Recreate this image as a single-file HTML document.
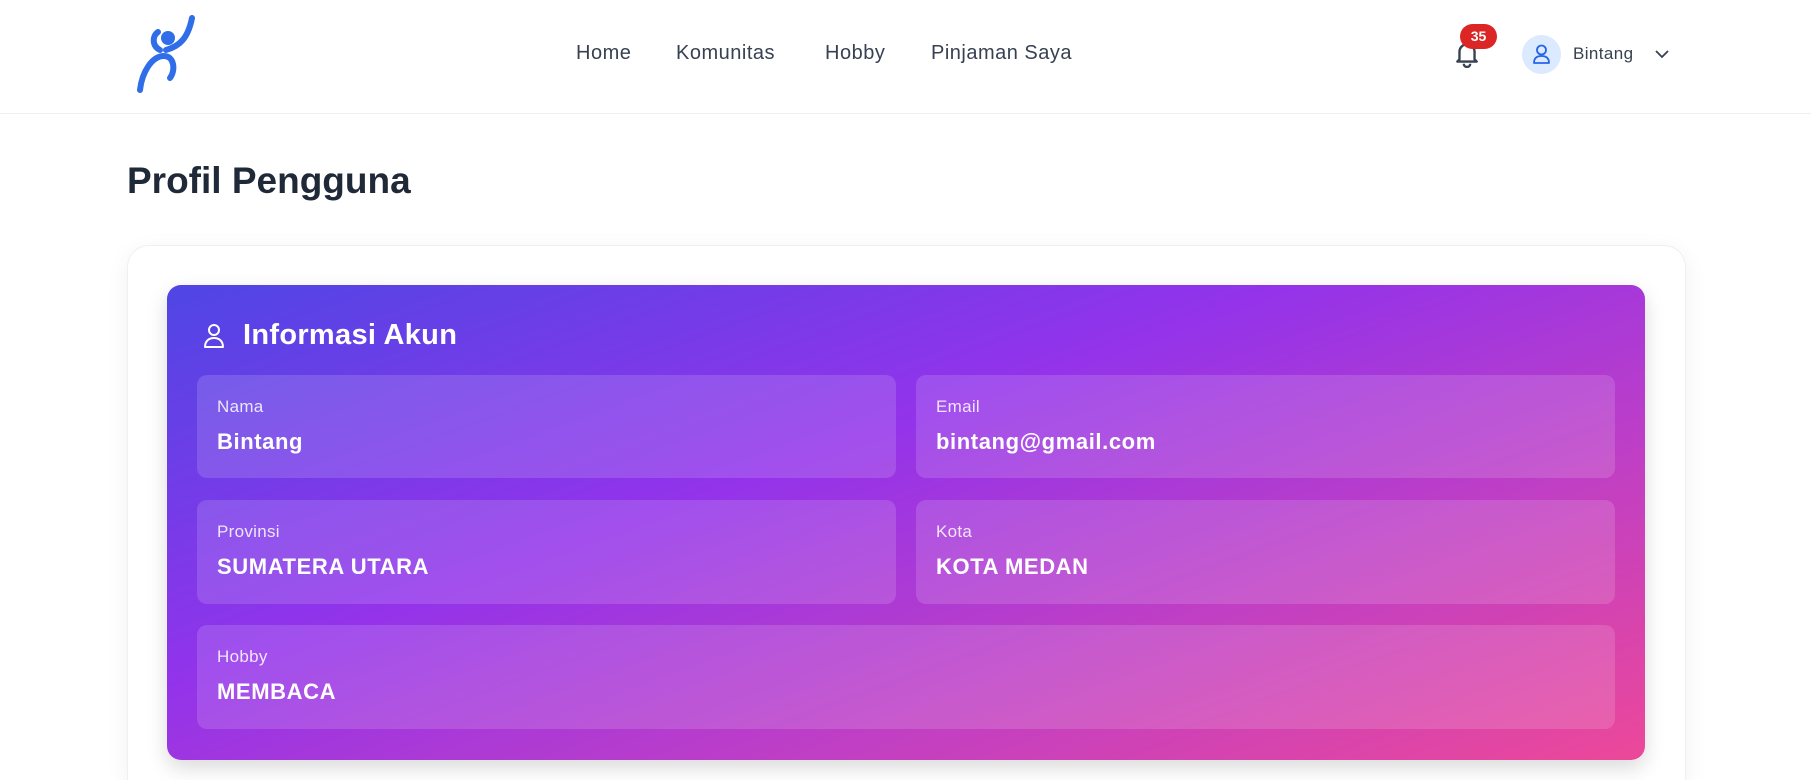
<!DOCTYPE html>
<html><head><meta charset="utf-8"><style>
*{box-sizing:border-box;margin:0;padding:0}
html{width:1811px;height:780px;overflow:hidden}
body{width:1811px;height:780px;overflow:hidden;background:#fff;font-family:"Liberation Sans",sans-serif;position:relative}
.hdr{position:absolute;left:0;top:0;width:1811px;height:114px;border-bottom:1px solid #eef0f3;background:#fff}
.nav a{position:absolute;top:42px;font-size:20px;letter-spacing:0.5px;color:#374151;text-decoration:none}
.badge{position:absolute;left:1460px;top:24px;width:37px;height:25px;background:#dc2626;color:#fff;border-radius:13px;font-size:14px;font-weight:bold;text-align:center;line-height:25px}
.av{position:absolute;left:1522px;top:35px;width:39px;height:39px;border-radius:50%;background:#dbeafe}
h1{position:absolute;left:127px;top:160px;font-size:37px;font-weight:bold;color:#1f2937}
.card{position:absolute;left:127px;top:245px;width:1559px;height:535px;border:1px solid #eef0f3;border-bottom:none;border-radius:22px 22px 0 0;background:#fff;box-shadow:0 6px 24px rgba(0,0,0,0.06)}
.panel{position:absolute;left:167px;top:285px;width:1478px;height:475px;border-radius:14px;background:linear-gradient(160deg,#4f46e5 0%,#9333ea 40%,#c03fc4 70%,#ec4899 100%);box-shadow:0 8px 20px rgba(0,0,0,0.15)}
.f{position:absolute;border-radius:10px;background:rgba(255,255,255,0.14);color:#fff}
.f .l{position:absolute;left:20px;top:22px;font-size:17px;letter-spacing:0.3px;color:rgba(255,255,255,0.85)}
.f .v{position:absolute;left:20px;top:54px;font-size:22px;font-weight:bold;letter-spacing:0.6px}
</style></head><body>
<div class="hdr">
<svg style="position:absolute;left:130px;top:12px" width="72" height="84" viewBox="0 0 72 84">
<path d="M62 6 C58 26 50 34 36 38" stroke="#2f6ee8" stroke-width="6" fill="none" stroke-linecap="round"/>
<path d="M28 20 C22 24 22 34 30 38" stroke="#2f6ee8" stroke-width="6" fill="none" stroke-linecap="round"/>
<circle cx="38" cy="26" r="7" fill="#2f6ee8"/>
<path d="M10 78 C12 60 22 44 34 44 C44 44 46 58 40 66" stroke="#2f6ee8" stroke-width="6" fill="none" stroke-linecap="round"/>
</svg>
<div class="nav"><a style="left:576px">Home</a><a style="left:676px">Komunitas</a><a style="left:825px">Hobby</a><a style="left:931px">Pinjaman Saya</a></div>
<svg style="position:absolute;left:1454px;top:40px" width="26" height="28" viewBox="0 0 24 26"><path d="M5 18V11a7 7 0 0 1 14 0v7l2 2H3z M9 22a3 3 0 0 0 6 0" stroke="#374151" stroke-width="2.2" fill="none" stroke-linejoin="round"/></svg>
<div class="badge">35</div>
<div class="av"><svg width="39" height="39" viewBox="0 0 39 39"><circle cx="19.5" cy="15" r="4.5" stroke="#2563eb" stroke-width="1.8" fill="none"/><path d="M12 28c0-5 3-7 7.5-7s7.5 2 7.5 7z" stroke="#2563eb" stroke-width="1.8" fill="none" stroke-linejoin="round"/></svg></div>
<div style="position:absolute;left:1573px;top:44px;font-size:17px;letter-spacing:0.4px;color:#374151">Bintang</div>
<svg style="position:absolute;left:1654px;top:48px" width="16" height="12" viewBox="0 0 16 12"><path d="M2 3l6 6 6-6" stroke="#374151" stroke-width="1.8" fill="none"/></svg>
</div>
<h1>Profil Pengguna</h1>
<div class="card"></div>
<div class="panel">
<svg style="position:absolute;left:35px;top:37px" width="24" height="28" viewBox="0 0 24 28"><circle cx="12" cy="8" r="5" stroke="#fff" stroke-width="2" fill="none"/><path d="M3 25c0-6 4-9 9-9s9 3 9 9z" stroke="#fff" stroke-width="2" fill="none" stroke-linejoin="round"/></svg>
<div style="position:absolute;left:76px;top:34px;font-size:29px;font-weight:bold;color:#fff;letter-spacing:0.3px">Informasi Akun</div>
<div class="f" style="left:30px;top:90px;width:699px;height:103px"><div class="l">Nama</div><div class="v">Bintang</div></div>
<div class="f" style="left:749px;top:90px;width:699px;height:103px"><div class="l">Email</div><div class="v">bintang@gmail.com</div></div>
<div class="f" style="left:30px;top:215px;width:699px;height:104px"><div class="l">Provinsi</div><div class="v">SUMATERA UTARA</div></div>
<div class="f" style="left:749px;top:215px;width:699px;height:104px"><div class="l">Kota</div><div class="v">KOTA MEDAN</div></div>
<div class="f" style="left:30px;top:340px;width:1418px;height:104px"><div class="l">Hobby</div><div class="v">MEMBACA</div></div>
</div>
</body></html>
